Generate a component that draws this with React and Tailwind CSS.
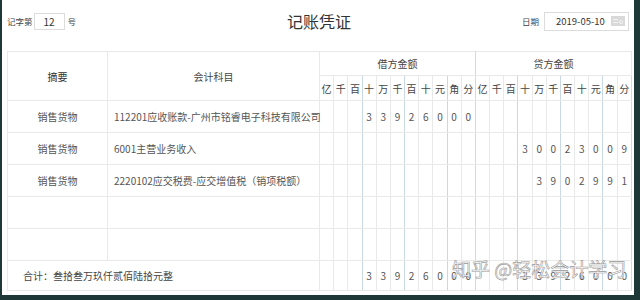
import React from "react";

const UNITS = ["亿", "千", "百", "十", "万", "千", "百", "十", "元", "角", "分"];

const ROWS = [
  {
    summary: "销售货物",
    account: "112201应收账款-广州市铭睿电子科技有限公司",
    debit: "33926000",
    credit: "",
  },
  { summary: "销售货物", account: "6001主营业务收入", debit: "", credit: "30023009" },
  {
    summary: "销售货物",
    account: "2220102应交税费-应交增值税（销项税额）",
    debit: "",
    credit: "3902991",
  },
  { summary: "", account: "", debit: "", credit: "" },
  { summary: "", account: "", debit: "", credit: "" },
];

// right border colour of the 11 digit cells: group lines are bluish
function sep(i) {
  if (i === 2 || i === 5 || i === 8) return "border-r-[#c9d9e4]!";
  if (i === 10) return "border-r-[#cfdbe2]!";
  return "";
}

function spread(amount) {
  const cells = Array(11).fill("");
  const s = amount || "";
  for (let k = 0; k < s.length; k++) {
    cells[11 - s.length + k] = s[k];
  }
  return cells;
}

const cell = "border border-[#e9e9e9] p-0";

function DigitCells({ amount }) {
  return spread(amount).map((d, i) => (
    <td key={i} className={`${cell} ${sep(i)} text-center text-[10px] text-[#555]`}>
      {d}
    </td>
  ));
}

function CalendarIcon() {
  return (
    <svg width="14" height="10" viewBox="0 0 14 10" className="shrink-0">
      <rect x="0" y="0" width="14" height="10" fill="#d9d9d9" />
      <rect x="2" y="3" width="5" height="1" fill="#f4f4f4" />
      <rect x="2" y="6" width="5" height="1" fill="#f4f4f4" />
      <circle cx="10" cy="6" r="1.6" fill="none" stroke="#f4f4f4" strokeWidth="0.9" />
    </svg>
  );
}

export default function App() {
  return (
    <div className="relative w-[640px] h-[300px] bg-[#1d3836] font-['Noto_Sans_CJK_SC',sans-serif] overflow-hidden">
      <div className="ml-[2px] mr-[6px] h-[295px] bg-white">
        {/* header */}
        <div className="grid grid-cols-[1fr_auto_1fr] items-center h-[42px] pl-[5px] pr-[5px]">
          <div className="flex items-center text-[8.5px] text-[#444]">
            <span>记字第</span>
            <div className="ml-[1px] w-[31px] h-[17px] border border-[#dcdcdc] flex items-center justify-center text-[10px] text-[#333]">
              12
            </div>
            <span className="ml-[3px]">号</span>
          </div>
          <div className="pl-[2px] text-[16px] text-[#333] leading-none">记账凭证</div>
          <div className="flex items-center justify-end text-[8.5px] text-[#444]">
            <span>日期</span>
            <div className="ml-[5px] w-[85px] h-[19px] shrink-0 border border-[#dcdcdc] flex items-center justify-between pl-[11px] pr-[3px]">
              <span className="text-[9.5px] text-[#333] whitespace-nowrap">2019-05-10</span>
              <CalendarIcon />
            </div>
          </div>
        </div>

        {/* voucher table */}
        <div className="mt-[9px] pl-[5px]">
          <table className="table-fixed border-collapse w-[625px] text-[10px] text-[#555]">
            <colgroup>
              <col className="w-[100px]" />
              <col className="w-[212px]" />
              {Array.from({ length: 22 }).map((_, i) => (
                <col key={i} />
              ))}
            </colgroup>
            <tbody>
              <tr className="h-[24px]">
                <td rowSpan={2} className={`${cell} text-center text-[#333]`}>摘要</td>
                <td rowSpan={2} className={`${cell} text-center text-[#444]`}>会计科目</td>
                <td colSpan={11} className={`${cell} border-r-[#cfdbe2]! text-center text-[#444]`}>借方金额</td>
                <td colSpan={11} className={`${cell} text-center text-[#444]`}>贷方金额</td>
              </tr>
              <tr className="h-[25px]">
                {[...UNITS, ...UNITS].map((u, i) => (
                  <td key={i} className={`${cell} ${sep(i % 11)} text-center text-[#444]`}>
                    {u}
                  </td>
                ))}
              </tr>
              {ROWS.map((r, idx) => (
                <tr key={idx} className="h-[32px]">
                  <td className={`${cell} text-center`}>{r.summary}</td>
                  <td className={`${cell} pl-[6px] whitespace-nowrap`}>{r.account}</td>
                  <DigitCells amount={r.debit} />
                  <DigitCells amount={r.credit} />
                </tr>
              ))}
              <tr className="h-[30px]">
                <td colSpan={2} className={`${cell} pl-[15px] text-[#444]`}>
                  合计：叁拾叁万玖仟贰佰陆拾元整
                </td>
                <DigitCells amount="33926000" />
                <DigitCells amount="33926000" />
              </tr>
            </tbody>
          </table>
        </div>
      </div>

      {/* watermark over the total row */}
      <div className="absolute left-[452px] top-[259px] text-[19px] leading-none text-white/90 [-webkit-text-stroke:0.6px_#999] whitespace-nowrap">
        知乎 @轻松会计学习
      </div>
    </div>
  );
}
